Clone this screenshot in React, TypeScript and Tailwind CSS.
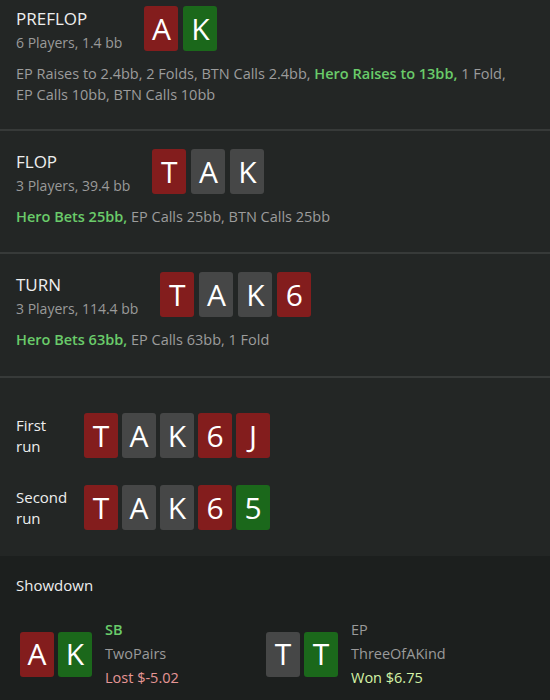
import React from "react";

type Suit = "r" | "g" | "n";

interface CardProps {
    rank: string;
    suit: Suit;
}

const suitBg: Record<Suit, string> = {
    r: "bg-[#831d1d]",
    g: "bg-[#1b681b]",
    n: "bg-[#464747]",
};

const Card: React.FC<CardProps> = ({ rank, suit }) => (
    <div className={`${suitBg[suit]} w-[34px] h-[45px] rounded-[3px] flex items-center justify-center text-[30px] leading-none text-white`}>
        {rank}
    </div>
);

const parse = (s: string) =>
    s.split(" ").map(c => ({ rank: c[0], suit: c[1] as Suit }));

const CardRow: React.FC<{ cards: string; gap?: string }> = ({ cards, gap = "gap-[5px]" }) => (
    <div className={`flex ${gap}`}>
        {parse(cards).map((c, i) => (
            <Card key={i} rank={c.rank} suit={c.suit} />
        ))}
    </div>
);

interface StreetProps {
    name: string;
    info: string;
    cards: string;
    children: React.ReactNode;
    top?: string;
    bottom?: string;
}

const Street: React.FC<StreetProps> = ({ name, info, cards, children, top = "pt-[19px]", bottom = "pb-[25px]" }) => (
    <div className={`px-4 ${top} ${bottom} border-b-2 border-[#373a39]`}>
        <div className="flex items-start">
            <div className="mr-[22px]">
                <div className="text-[17px] leading-[24px] text-[#eeeeee]">{name}</div>
                <div className="text-[14px] leading-[20px] text-[#9a9a9a] mt-[2px]">{info}</div>
            </div>
            <div className="-mt-[1px]">
                <CardRow cards={cards} />
            </div>
        </div>
        <div className="mt-[10px] text-[14.5px] leading-[21px] text-[#9c9c9c]">{children}</div>
    </div>
);

const Hero: React.FC<{ children: React.ReactNode }> = ({ children }) => (
    <span className="text-[#6acb6a] font-semibold">{children}</span>
);

const Run: React.FC<{ label: string; cards: string }> = ({ label, cards }) => (
    <div className="flex items-center gap-[12px]">
        <div className="w-[56px] text-[15px] leading-[21px] text-[#eeeeee]">{label}</div>
        <CardRow cards={cards} gap="gap-[4px]" />
    </div>
);

interface PlayerProps {
    cards: string;
    pos: string;
    posClass: string;
    hand: string;
    result: string;
    resultClass: string;
}

const Player: React.FC<PlayerProps> = ({ cards, pos, posClass, hand, result, resultClass }) => (
    <div className="flex items-center gap-[13px]">
        <CardRow cards={cards} gap="gap-[4px]" />
        <div className="text-[14.5px] leading-[24px]">
            <div className={posClass}>{pos}</div>
            <div className="text-[#9a9a9a]">{hand}</div>
            <div className={resultClass}>{result}</div>
        </div>
    </div>
);

export default function App() {
    return (
        <div className="w-[550px] h-[700px] overflow-hidden bg-[#232625] font-['Open_Sans',sans-serif] flex flex-col">
            <Street name="PREFLOP" info="6 Players, 1.4 bb" cards="Ar Kg" top="pt-[7px]" bottom="pb-[24px]">
                EP Raises to 2.4bb, 2 Folds, BTN Calls 2.4bb, <Hero>Hero Raises to 13bb,</Hero> 1 Fold,
                <br />
                EP Calls 10bb, BTN Calls 10bb
            </Street>
            <Street name="FLOP" info="3 Players, 39.4 bb" cards="Tr An Kn">
                <Hero>Hero Bets 25bb,</Hero> EP Calls 25bb, BTN Calls 25bb
            </Street>
            <Street name="TURN" info="3 Players, 114.4 bb" cards="Tr An Kn 6r" bottom="pb-[26px]">
                <Hero>Hero Bets 63bb,</Hero> EP Calls 63bb, 1 Fold
            </Street>

            {/* run it twice */}
            <div className="px-4 pt-[35px] pb-[26px] flex flex-col gap-[27px]">
                <Run label="First run" cards="Tr An Kn 6r Jr" />
                <Run label="Second run" cards="Tr An Kn 6r 5g" />
            </div>

            <div className="flex-1 bg-[#1c1f1e] px-4 pt-[19px]">
                <div className="text-[15px] leading-[20px] text-[#eeeeee]">Showdown</div>
                <div className="mt-[23px] pl-[4px] grid grid-cols-[246px_1fr]">
                    <Player
                        cards="Ar Kg"
                        pos="SB"
                        posClass="text-[#6acb6a] font-semibold"
                        hand="TwoPairs"
                        result="Lost $-5.02"
                        resultClass="text-[#e69696]"
                    />
                    <Player
                        cards="Tn Tg"
                        pos="EP"
                        posClass="text-[#9a9a9a]"
                        hand="ThreeOfAKind"
                        result="Won $6.75"
                        resultClass="text-[#d4f3a6]"
                    />
                </div>
            </div>
        </div>
    );
}
